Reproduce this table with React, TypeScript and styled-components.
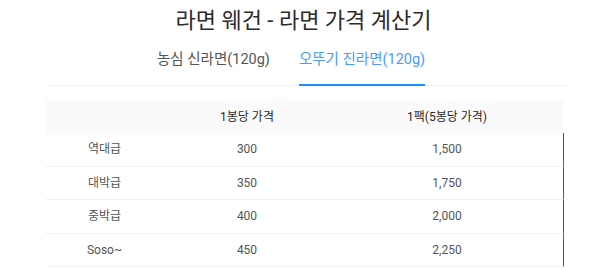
import React, { useState } from "react";
import styled, { createGlobalStyle } from "styled-components";

const GlobalStyle = createGlobalStyle`
  html, body { margin: 0; padding: 0; background: #ffffff; }
  body {
    font-family: Roboto, "Noto Sans CJK KR", sans-serif;
    color: #555555;
    -webkit-font-smoothing: antialiased;
  }
`;

const Page = styled.div`
  width: 600px;
  display: flex;
  flex-direction: column;
  align-items: flex-start;
  padding-left: 46px;
  box-sizing: border-box;
`;

const Title = styled.h1`
  width: 520px;
  margin: 6px 0 0;
  font-size: 22px;
  line-height: 30px;
  font-weight: 400;
  text-align: center;
  color: #2b2b2b;
  padding-right: 5px;
  box-sizing: border-box;
`;

const TabNav = styled.div`
  width: 520px;
  display: flex;
  gap: 29px;
  padding-left: 111px;
  box-sizing: border-box;
  border-bottom: 1px solid #f0f0f0;
`;

const Tab = styled.button<{ $active: boolean }>`
  position: relative;
  border: 0;
  background: none;
  font-family: inherit;
  font-size: 14.5px;
  line-height: 22px;
  padding: 13px 0 14px;
  cursor: pointer;
  color: ${(p) => (p.$active ? "#4a9df5" : "#555555")};

  &::after {
    content: "";
    display: ${(p) => (p.$active ? "block" : "none")};
    position: absolute;
    left: 0;
    right: 0;
    bottom: -1px;
    height: 2px;
    background: #1890ff;
  }
`;

const Table = styled.div`
  margin-top: 14px;
  width: 518px;
  display: flex;
  flex-direction: column;
`;

const Row = styled.div<{ $head?: boolean }>`
  display: grid;
  grid-template-columns: 117px 168px 232px;
  align-items: center;
  box-sizing: border-box;
  height: ${(p) => (p.$head ? "33px" : "33.5px")};
  background: ${(p) => (p.$head ? "#fafafa" : "#ffffff")};
  border-bottom: ${(p) => (p.$head ? "none" : "1px solid #f0f0f0")};
  border-right: 1px solid ${(p) => (p.$head ? "#ffffff" : "#5a5a5a")};
`;

const Cell = styled.div<{ $head?: boolean }>`
  text-align: center;
  font-size: 12px;
  line-height: 16px;
  font-weight: 400;
  color: ${(p) => (p.$head ? "#2a2a2a" : "#555555")};
`;

const rows = [
  { name: "역대급", one: "300", pack: "1,500" },
  { name: "대박급", one: "350", pack: "1,750" },
  { name: "중박급", one: "400", pack: "2,000" },
  { name: "Soso~", one: "450", pack: "2,250" },
];

export default function App() {
  const [tab, setTab] = useState(1);
  const tabs = ["농심 신라면(120g)", "오뚜기 진라면(120g)"];
  return (
    <>
      <GlobalStyle />
      <Page>
        <Title>라면 웨건 - 라면 가격 계산기</Title>
        <TabNav>
          {tabs.map((t, i) => (
            <Tab key={t} $active={tab === i} onClick={() => setTab(i)}>
              {t}
            </Tab>
          ))}
        </TabNav>
        <Table>
          <Row $head>
            <Cell $head />
            <Cell $head>1봉당 가격</Cell>
            <Cell $head>1팩(5봉당 가격)</Cell>
          </Row>
          {rows.map((r) => (
            <Row key={r.name}>
              <Cell>{r.name}</Cell>
              <Cell>{r.one}</Cell>
              <Cell>{r.pack}</Cell>
            </Row>
          ))}
        </Table>
      </Page>
    </>
  );
}
